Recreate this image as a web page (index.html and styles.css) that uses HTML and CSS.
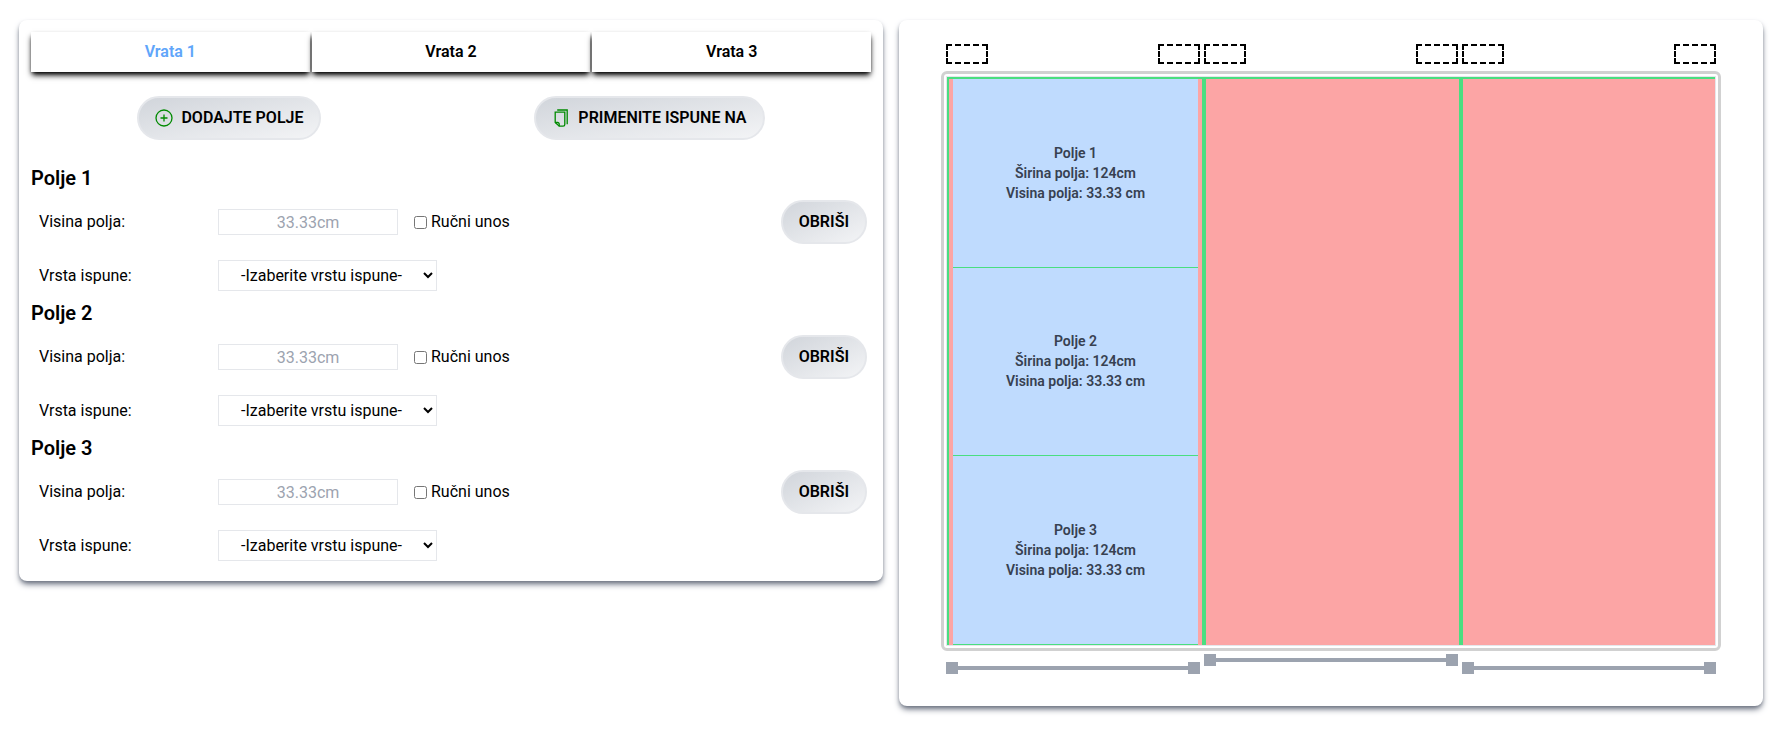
FILE: index.html
```html
<!DOCTYPE html>
<html lang="sr-Latn">
<head>
<meta charset="utf-8">
<meta name="viewport" content="width=device-width, initial-scale=1">
<title>Vrata</title>
<link rel="stylesheet" href="styles.css">
</head>
<body>
<main class="layout">
  <section class="panel editor">
    <nav class="tabs">
      <button type="button" class="tab tab-active">Vrata 1</button>
      <button type="button" class="tab">Vrata 2</button>
      <button type="button" class="tab">Vrata 3</button>
    </nav>
    <div class="actions">
      <button type="button" class="pill">
        <svg class="icon" viewBox="0 0 18 18" aria-hidden="true"><circle cx="9" cy="9" r="8"/><path d="M9 5.5v7M5.5 9h7"/></svg>
        DODAJTE POLJE
      </button>
      <button type="button" class="pill">
        <svg class="icon" viewBox="0 0 18 18" aria-hidden="true"><path d="M3.200 3.200h9.600v12.300a1.700 1.700 0 0 1-1.700 1.700H7.200L3.200 13.500z"/><path d="M3.200 13.500h2.500a1.500 1.500 0 0 1 1.500 1.500v2.200"/><path d="M5.200 1h10v14.200"/></svg>
        PRIMENITE ISPUNE NA
      </button>
    </div>
    <div class="fields">
      <section class="field">
        <h2 class="field-title">Polje 1</h2>
        <div class="row">
          <label class="row-label" for="height-1">Visina polja:</label>
          <input class="height" id="height-1" type="text" placeholder="33.33cm">
          <label class="manual"><input class="check" type="checkbox">Ručni unos</label>
          <button type="button" class="pill remove">OBRIŠI</button>
        </div>
        <div class="row">
          <label class="row-label" for="fill-1">Vrsta ispune:</label>
          <select class="fill" id="fill-1"><option>-Izaberite vrstu ispune-</option></select>
        </div>
      </section>
      <section class="field">
        <h2 class="field-title">Polje 2</h2>
        <div class="row">
          <label class="row-label" for="height-2">Visina polja:</label>
          <input class="height" id="height-2" type="text" placeholder="33.33cm">
          <label class="manual"><input class="check" type="checkbox">Ručni unos</label>
          <button type="button" class="pill remove">OBRIŠI</button>
        </div>
        <div class="row">
          <label class="row-label" for="fill-2">Vrsta ispune:</label>
          <select class="fill" id="fill-2"><option>-Izaberite vrstu ispune-</option></select>
        </div>
      </section>
      <section class="field">
        <h2 class="field-title">Polje 3</h2>
        <div class="row">
          <label class="row-label" for="height-3">Visina polja:</label>
          <input class="height" id="height-3" type="text" placeholder="33.33cm">
          <label class="manual"><input class="check" type="checkbox">Ručni unos</label>
          <button type="button" class="pill remove">OBRIŠI</button>
        </div>
        <div class="row">
          <label class="row-label" for="fill-3">Vrsta ispune:</label>
          <select class="fill" id="fill-3"><option>-Izaberite vrstu ispune-</option></select>
        </div>
      </section>
    </div>
  </section>

  <section class="panel preview">
    <div class="brackets">
      <div class="bracket-pair"><span class="bracket"></span><span class="bracket"></span></div>
      <div class="bracket-pair"><span class="bracket"></span><span class="bracket"></span></div>
      <div class="bracket-pair"><span class="bracket"></span><span class="bracket"></span></div>
    </div>
    <div class="frame">
      <div class="doors">
        <div class="door door-selected">
          <div class="cell"><p>Polje 1</p><p>Širina polja: 124cm</p><p>Visina polja: 33.33 cm</p></div>
          <div class="cell"><p>Polje 2</p><p>Širina polja: 124cm</p><p>Visina polja: 33.33 cm</p></div>
          <div class="cell"><p>Polje 3</p><p>Širina polja: 124cm</p><p>Visina polja: 33.33 cm</p></div>
        </div>
        <div class="door"></div>
        <div class="door door-last"></div>
      </div>
    </div>
    <div class="rails">
      <div class="rail rail-low"><span class="stop"></span><span class="bar"></span><span class="stop"></span></div>
      <div class="rail"><span class="stop"></span><span class="bar"></span><span class="stop"></span></div>
      <div class="rail rail-low"><span class="stop"></span><span class="bar"></span><span class="stop"></span></div>
    </div>
  </section>
</main>
</body>
</html>
```
FILE: styles.css
```css
*, *::before, *::after { box-sizing: border-box; }

body {
  margin: 0;
  background: #fff;
  color: #000;
  font-family: Roboto, "Liberation Sans", sans-serif;
  font-size: 16px;
  line-height: 24px;
}

h2, p { margin: 0; }
button, input, select { font: inherit; color: inherit; margin: 0; }

.layout {
  display: grid;
  grid-template-columns: 1fr 1fr;
  align-items: start;
  gap: 16px;
  padding: 20px 29px 20px 19px;
}

.panel {
  border-radius: 8px;
  background: #fff;
  box-shadow: 0 4px 6px -1px #6b7280, 0 2px 4px -2px #6b7280;
}

.editor { padding: 12px; }

.tabs {
  display: grid;
  grid-template-columns: repeat(3, 1fr);
  gap: 2px;
}

.tab {
  padding: 8px;
  border: 0;
  background: #fff;
  font-weight: 600;
  box-shadow: 0 4px 6px -1px #000, 0 2px 4px -2px #000;
}

.tab-active { color: #60a5fa; }

.actions {
  display: flex;
  justify-content: space-around;
  padding: 24px 0;
}

.pill {
  display: flex;
  align-items: center;
  gap: 8px;
  padding: 8px 16px;
  border: 2px solid #e5e7eb;
  border-radius: 24px;
  background: linear-gradient(to bottom right, #d1d5db, #f3f4f6);
  font-weight: 600;
}

.icon {
  width: 18px;
  height: 18px;
  fill: none;
  stroke: #008a00;
  stroke-width: 1.3;
}

.field-title {
  font-size: 20px;
  line-height: 28px;
  font-weight: 600;
}

.row {
  display: flex;
  align-items: center;
  padding: 8px 4px 8px 8px;
}

.row-label { width: 179px; }

.height {
  width: 180px;
  height: 26px;
  padding: 0;
  border: 1px solid #e5e7eb;
  background: #fff;
  text-align: center;
}

.height::placeholder { color: #9ca3af; }

.manual {
  display: flex;
  align-items: center;
  gap: 4px;
  margin-left: 16px;
}

.check {
  width: 13px;
  height: 13px;
}

.remove { margin-left: auto; }

.fill {
  width: 219px;
  height: 31px;
  padding: 0 16px;
  border: 1px solid #e5e7eb;
  background-color: #fff;
  text-align: center;
}

.preview { padding: 24px 42px 32px; }

.brackets, .rails {
  display: grid;
  grid-template-columns: repeat(3, 1fr);
  gap: 4px;
  padding: 0 5px;
}

.brackets { margin-bottom: 7px; }

.bracket-pair {
  display: flex;
  justify-content: space-between;
}

.bracket {
  width: calc(100% / 6);
  height: 20px;
  border: 2px dashed #000;
}

.frame {
  padding: 2px;
  border: 3px solid #d1d1d1;
  border-radius: 6px;
}

.doors {
  display: grid;
  grid-template-columns: 257fr 257fr 254fr;
  aspect-ratio: 770 / 570;
  border: 1px solid #e5e7eb;
}

.door {
  border: 2px solid #4ade80;
  border-bottom: 0;
  background: #fca5a5;
}

.door-last { border-right: 0; }

.door-selected {
  display: grid;
  grid-template-rows: repeat(3, 1fr);
  padding: 0 4px;
}

.cell {
  display: flex;
  flex-direction: column;
  justify-content: center;
  border-bottom: 1px solid #4ade80;
  background: #bfdbfe;
  color: #374151;
  font-size: 14px;
  line-height: 20px;
  font-weight: 600;
  text-align: center;
}

.rails {
  align-items: start;
  margin-top: 3px;
}

.rail {
  display: flex;
  align-items: center;
}

.rail-low { padding-top: 8px; }

.stop {
  width: 12px;
  height: 12px;
  background: #9ca3af;
}

.bar {
  flex: 1;
  height: 4px;
  background: #9ca3af;
}
```
